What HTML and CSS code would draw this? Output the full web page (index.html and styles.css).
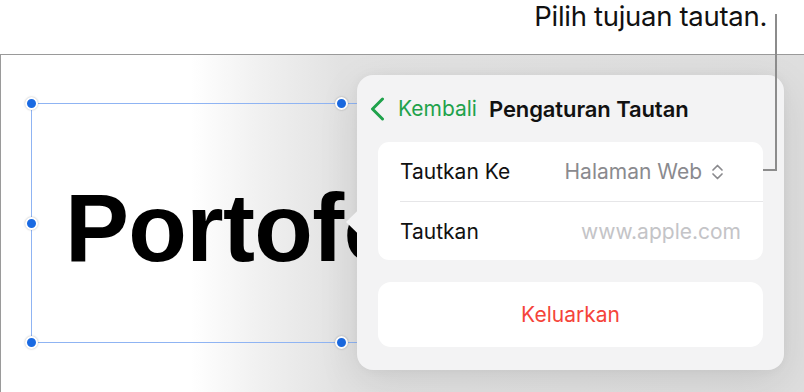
FILE: index.html
```html
<!DOCTYPE html>
<html lang="id">
<head>
<meta charset="utf-8">
<title>Pengaturan Tautan</title>
<link rel="stylesheet" href="styles.css">
</head>
<body>
<div class="page">
  <header class="callout-bar">
    <span class="callout-text">Pilih tujuan tautan.</span>
  </header>
  <div class="callout-line" aria-hidden="true"></div>
  <main class="canvas">
    <div class="textbox">
      <div class="textbox-text">Portofo</div>
      <span class="handle h-tl"></span>
      <span class="handle h-tr"></span>
      <span class="handle h-ml"></span>
      <span class="handle h-bl"></span>
      <span class="handle h-br"></span>
    </div>
    <section class="popover">
      <span class="popover-arrow"></span>
      <div class="pop-header">
        <button class="back">
          <svg class="back-icon" width="15" height="24" viewBox="0 0 15 24"><path d="M12.5 2 L2.5 12 L12.5 22" fill="none" stroke="#1fa24b" stroke-width="3" stroke-linecap="round" stroke-linejoin="round"/></svg>
          <span>Kembali</span>
        </button>
        <h1 class="pop-title">Pengaturan Tautan</h1>
      </div>
      <div class="group">
        <div class="row row-select">
          <span class="row-label">Tautkan Ke</span>
          <span class="row-value">Halaman Web
            <svg class="updown" width="13" height="18" viewBox="0 0 13 18"><path d="M2 7 L6.5 2.5 L11 7 M2 11 L6.5 15.5 L11 11" fill="none" stroke="#8a8a8e" stroke-width="1.7" stroke-linecap="round" stroke-linejoin="round"/></svg>
          </span>
        </div>
        <div class="row">
          <span class="row-label">Tautkan</span>
          <span class="row-placeholder">www.apple.com</span>
        </div>
      </div>
      <button class="remove">Keluarkan</button>
    </section>
  </main>
</div>
</body>
</html>
```

FILE: styles.css
```css
* { box-sizing: border-box; }
html, body { margin: 0; padding: 0; }
body {
  width: 804px;
  height: 392px;
  overflow: hidden;
  background: #ffffff;
  font-family: Inter, "Noto Sans", sans-serif;
}
.page {
  position: relative;
  width: 804px;
  height: 392px;
  display: flex;
  flex-direction: column;
}
.callout-bar {
  height: 54px;
  display: flex;
  justify-content: flex-end;
  padding: 0 37px 0 0;
}
.callout-text {
  font-family: Inter, "Liberation Sans", sans-serif;
  font-size: 27.5px;
  line-height: 34px;
  margin-top: -1px;
  color: #111;
  letter-spacing: -0.3px;
}
.callout-line {
  position: absolute;
  left: 763px;
  top: 14px;
  width: 14px;
  height: 157px;
  border-right: 2px solid #8c8c8c;
  border-bottom: 2px solid #8c8c8c;
  z-index: 5;
}
.canvas {
  flex: 1;
  position: relative;
  border-top: 1px solid #9a9a9a;
  border-left: 1.5px solid #9a9a9a;
  background: linear-gradient(to right, #ffffff 0px, #ffffff 190px, #f0f0f0 260px, #e2e2e2 340px, #dedede 804px);
  overflow: hidden;
}
.textbox {
  position: absolute;
  left: 30px;
  top: 48px;
  width: 480px;
  height: 240px;
  border: 1px solid #8fb4f3;
  border-right: none;
}
.textbox-text {
  display: inline-block;
  padding: 76px 0 0 33px;
  font-family: "Liberation Sans", Arial, sans-serif;
  font-weight: 700;
  font-size: 96px;
  line-height: 96px;
  letter-spacing: -0.7px;
  color: #000;
  white-space: nowrap;
}
.handle {
  position: absolute;
  width: 13px;
  height: 13px;
  border-radius: 50%;
  background: #1a6ae2;
  border: 2px solid #ffffff;
  box-shadow: 0 0 2px rgba(0,0,0,0.3);
}
.h-tl { left: -7px; top: -7px; }
.h-tr { left: 303px; top: -7px; }
.h-ml { left: -7px; top: 113px; }
.h-bl { left: -7px; top: 232px; }
.h-br { left: 303px; top: 232px; }
.popover {
  position: absolute;
  left: 356px;
  top: 20px;
  width: 427px;
  height: 295px;
  background: #f3f3f4;
  border-radius: 16px;
  padding: 0 21px 23px;
  display: flex;
  flex-direction: column;
  box-shadow: 0 12px 40px rgba(0,0,0,0.10), 0 0 12px rgba(0,0,0,0.04);
}
.popover-arrow {
  position: absolute;
  left: -11px;
  top: 133px;
  width: 24px;
  height: 28px;
  background: #f3f3f4;
  clip-path: polygon(0 50%, 60% 0, 100% 0, 100% 100%, 60% 100%);
}
.pop-header {
  height: 67px;
  display: flex;
  align-items: center;
  gap: 12px;
  margin-left: -8px;
}
.back {
  display: flex;
  align-items: center;
  gap: 13px;
  border: none;
  background: none;
  padding: 0;
  font-family: inherit;
  font-size: 21px;
  color: #1fa24b;
}
.back-icon { display: block; margin-top: 1px; }
.pop-title {
  margin: 0;
  font-size: 22px;
  font-weight: 600;
  color: #111;
  letter-spacing: -0.1px;
}
.group {
  background: #ffffff;
  border-radius: 11px;
  display: flex;
  flex-direction: column;
}
.row {
  height: 59px;
  margin-left: 22px;
  padding-right: 22px;
  display: flex;
  align-items: center;
  justify-content: space-between;
  font-size: 21px;
  color: #111;
}
.row + .row { border-top: 1px solid #e6e6e8; }
.row-select { padding-right: 39px; }
.row-value {
  display: flex;
  align-items: center;
  gap: 9px;
  color: #8a8a8e;
}
.updown { display: block; }
.row-placeholder { color: #c4c4c7; }
.remove {
  margin-top: 22px;
  height: 65px;
  border: none;
  border-radius: 13px;
  background: #ffffff;
  font-family: inherit;
  font-size: 21px;
  color: #f5443a;
}
```
